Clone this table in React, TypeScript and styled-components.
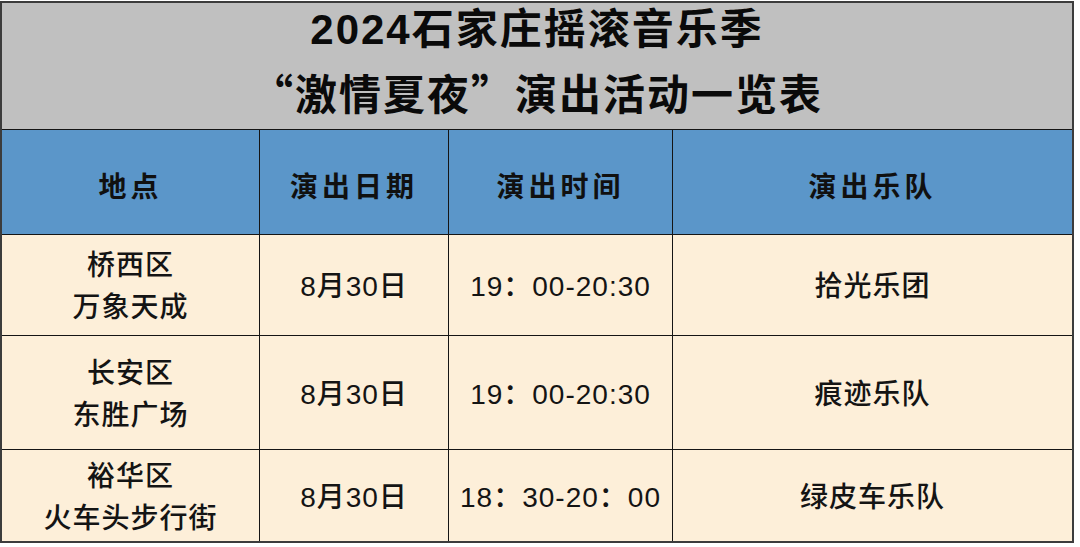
import React from 'react';
import styled, { createGlobalStyle } from 'styled-components';

const GlobalStyle = createGlobalStyle`
  body {
    margin: 0;
    background: #ffffff;
    font-family: "Liberation Sans", "Noto Sans CJK SC", sans-serif;
    color: #111111;
  }
`;

const Page = styled.div`
  padding-top: 1px;
  width: 1080px;
  height: 547px;
  box-sizing: border-box;
  overflow: hidden;
`;

const Sheet = styled.div`
  display: grid;
  grid-template-columns: 257px 188px 223px 399px;
  grid-template-rows: 126px 104px 100px 113px 91px;
  gap: 1px;
  width: fit-content;
  border: 2px solid #3c3c3c;
  background: #151515;
`;

const TitleCell = styled.div`
  grid-column: 1 / -1;
  display: flex;
  flex-direction: column;
  align-items: center;
  justify-content: center;
  padding-bottom: 6px;
  background: #c0c0c0;
  font-size: 42px;
  font-weight: 700;
  line-height: 62px;
  letter-spacing: 2px;
  color: #0a0a0a;
`;

// quotes are set full-width, as the CJK face draws them
const CjkQuote = styled.span`
  font-family: "Noto Sans CJK SC", sans-serif;
`;

const HeadCell = styled.div`
  display: flex;
  align-items: center;
  justify-content: center;
  padding-top: 6px;
  background: #5b96c9;
  font-size: 28px;
  font-weight: 700;
  letter-spacing: 4px;
  color: #101010;
`;

const BodyCell = styled.div`
  display: flex;
  flex-direction: column;
  align-items: center;
  justify-content: center;
  padding-top: 4px;
  background: #fdefd9;
  font-size: 28px;
  font-weight: 500;
  line-height: 42px;
  letter-spacing: 1px;
  color: #141414;
`;

const Line = styled.span`
  display: block;
  white-space: nowrap;
`;

type Show = {
  place: string[];
  date: string;
  time: string;
  band: string;
};

const shows: Show[] = [
  { place: ['桥西区', '万象天成'], date: '8月30日', time: '19：00-20:30', band: '拾光乐团' },
  { place: ['长安区', '东胜广场'], date: '8月30日', time: '19：00-20:30', band: '痕迹乐队' },
  { place: ['裕华区', '火车头步行街'], date: '8月30日', time: '18：30-20：00', band: '绿皮车乐队' },
];

const heads = ['地点', '演出日期', '演出时间', '演出乐队'];

export default function App() {
  return (
    <Page>
      <GlobalStyle />
      <Sheet>
        <TitleCell>
          <Line>2024石家庄摇滚音乐季</Line>
          <Line>
            <CjkQuote>“</CjkQuote>激情夏夜<CjkQuote>”</CjkQuote>演出活动一览表
          </Line>
        </TitleCell>
        {heads.map((h) => (
          <HeadCell key={h}>{h}</HeadCell>
        ))}
        {shows.map((s, i) => (
          <React.Fragment key={i}>
            <BodyCell>
              {s.place.map((p) => (
                <Line key={p}>{p}</Line>
              ))}
            </BodyCell>
            <BodyCell>{s.date}</BodyCell>
            <BodyCell>{s.time}</BodyCell>
            <BodyCell>{s.band}</BodyCell>
          </React.Fragment>
        ))}
      </Sheet>
    </Page>
  );
}
